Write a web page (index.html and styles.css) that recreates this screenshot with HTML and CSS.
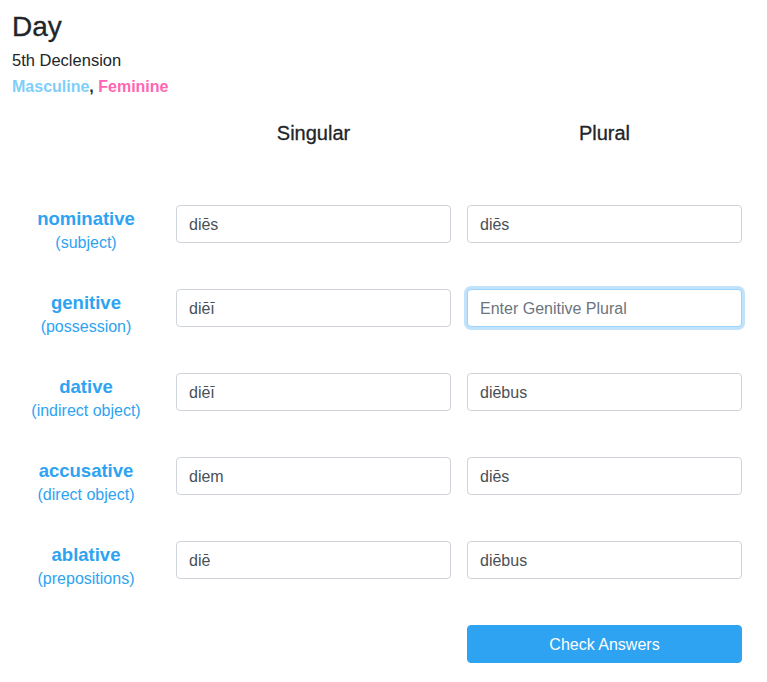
FILE: index.html
```html
<!DOCTYPE html>
<html lang="en">
<head>
<meta charset="utf-8">
<title>Day</title>
<link rel="stylesheet" href="styles.css">
</head>
<body>
<div class="page">
  <h3 class="title">Day</h3>
  <div class="decl">5th Declension</div>
  <div class="gender"><span class="masc">Masculine</span>, <span class="fem">Feminine</span></div>

  <div class="table">
    <div class="head-empty"></div>
    <div class="head">Singular</div>
    <div class="head">Plural</div>

    <div class="case"><div class="case-name">nominative</div><div class="case-use">(subject)</div></div>
    <input class="field" type="text" value="diēs">
    <input class="field" type="text" value="diēs">

    <div class="case"><div class="case-name">genitive</div><div class="case-use">(possession)</div></div>
    <input class="field" type="text" value="diēī">
    <input class="field focused" type="text" placeholder="Enter Genitive Plural" autofocus>

    <div class="case"><div class="case-name">dative</div><div class="case-use">(indirect object)</div></div>
    <input class="field" type="text" value="diēī">
    <input class="field" type="text" value="diēbus">

    <div class="case"><div class="case-name">accusative</div><div class="case-use">(direct object)</div></div>
    <input class="field" type="text" value="diem">
    <input class="field" type="text" value="diēs">

    <div class="case"><div class="case-name">ablative</div><div class="case-use">(prepositions)</div></div>
    <input class="field" type="text" value="diē">
    <input class="field" type="text" value="diēbus">

    <button class="check" type="button">Check Answers</button>
  </div>
</div>
</body>
</html>
```

FILE: styles.css
```css
html, body {
  margin: 0;
  padding: 0;
  background: #ffffff;
}

.page {
  padding: 10px 0 0 12px;
  font-family: "Liberation Sans", Arial, Helvetica, sans-serif;
  color: #212529;
}

.title {
  margin: 0;
  font-size: 28px;
  line-height: 34px;
  font-weight: 400;
  -webkit-text-stroke: 0.3px #212529;
}

.decl {
  margin-top: 4px;
  font-size: 16.5px;
  line-height: 24px;
}

.gender {
  margin-top: 3px;
  font-size: 16px;
  line-height: 24px;
  font-weight: 700;
}

.masc {
  color: #7ecefa;
}

.fem {
  color: #ff66b2;
}

.table {
  display: grid;
  grid-template-columns: 148px 275px 275px;
  column-gap: 16px;
  row-gap: 34px;
  margin-top: 22px;
  align-items: start;
}

.head {
  font-size: 20px;
  line-height: 24px;
  text-align: center;
  margin-bottom: 26px;
  -webkit-text-stroke: 0.3px #212529;
}

.case {
  padding-top: 2px;
  text-align: center;
  color: #2ea3f2;
}

.case-name {
  font-size: 18.5px;
  line-height: 24px;
  font-weight: 700;
}

.case-use {
  font-size: 16px;
  line-height: 24px;
}

.field {
  box-sizing: border-box;
  display: block;
  width: 275px;
  height: 38px;
  margin: 0;
  padding: 7px 12px 5px;
  border: 1px solid #ced4da;
  border-radius: 4px;
  font-family: "Liberation Sans", Arial, Helvetica, sans-serif;
  font-size: 16px;
  line-height: 24px;
  color: #495057;
  background: #ffffff;
  outline: none;
}

.field::placeholder {
  color: #6c757d;
  opacity: 1;
}

.field.focused,
.field:focus {
  border-color: #9dd3f8;
  box-shadow: 0 0 0 3px rgba(46, 163, 242, 0.3);
}

.check {
  grid-column: 3;
  box-sizing: border-box;
  width: 275px;
  height: 38px;
  margin: 0;
  padding: 7px 12px 5px;
  border: 1px solid #2ea3f2;
  border-radius: 4px;
  background: #2ea3f2;
  color: #ffffff;
  font-family: "Liberation Sans", Arial, Helvetica, sans-serif;
  font-size: 16px;
  line-height: 24px;
  cursor: pointer;
}
```
